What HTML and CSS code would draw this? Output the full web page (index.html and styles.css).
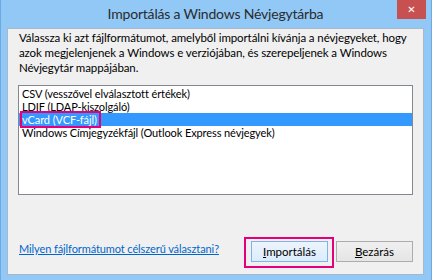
FILE: index.html
```html
<!DOCTYPE html>
<html lang="hu">

<head>
  <meta charset="UTF-8">
  <title>Importálás a Windows Névjegytárba</title>
  <link rel="stylesheet" href="styles.css">
</head>

<body>
  <div class="window">
    <div class="titlebar">
      <span></span>
      <div class="title">Importálás a Windows Névjegytárba</div>
      <div class="close-btn">&#x2715;</div>
    </div>

    <div class="content">
      <p class="intro">Válassza ki azt fájlformátumot, amelyből importálni kívánja a névjegyeket, hogy azok megjelenjenek a Windows e verziójában, és szerepeljenek a Windows Névjegytár mappájában.</p>

      <ul class="listbox">
        <li>CSV (vesszővel elválasztott értékek)</li>
        <li>LDIF (LDAP-kiszolgáló)</li>
        <li class="selected"><span class="mark">vCard (VCF-fájl)</span></li>
        <li>Windows Címjegyzékfájl (Outlook Express névjegyek)</li>
      </ul>

      <div class="footer">
        <a href="#" class="help-link">Milyen fájlformátumot célszerű választani?</a>
        <div class="buttons">
          <div class="mark-btn">
            <button class="btn btn-default"><u>I</u>mportálás</button>
          </div>
          <button class="btn btn-close"><u>B</u>ezárás</button>
        </div>
      </div>
    </div>
  </div>
</body>

</html>
```

FILE: styles.css
```css
body {
  margin: 0;
  font-family: Lato, sans-serif;
  font-size: 11.5px;
  letter-spacing: -0.1px;
  color: #000;
}

.window {
  width: 432px;
  height: 280px;
  box-sizing: border-box;
  background: #92c8f6;
  border-left: 1px solid #6fa9e2;
  border-right: 1px solid #6fa9e2;
  padding: 0 7px 5px 6px;
  display: flex;
  flex-direction: column;
}

.titlebar {
  height: 28px;
  display: grid;
  grid-template-columns: 1fr auto 1fr;
}

.title {
  font-size: 14px;
  letter-spacing: -0.2px;
  color: #2b2b2b;
  line-height: 28px;
}

.close-btn {
  justify-self: end;
  width: 29px;
  height: 19px;
  margin-right: -2px;
  background: #c75050;
  color: #fff;
  font-family: "DejaVu Sans", sans-serif;
  font-size: 10px;
  font-weight: bold;
  line-height: 19px;
  text-align: center;
}

.content {
  flex: 1;
  background: #f0f0f0;
  border: 1px solid #a8b8c8;
  padding: 1px 10px 0 10px;
  display: flex;
  flex-direction: column;
}

.intro {
  margin: 0 0 10px 1px;
  line-height: 15px;
}

.listbox {
  list-style: none;
  margin: 0;
  padding: 1px 0 0 0;
  height: 110px;
  box-sizing: border-box;
  background: #fff;
  border: 1px solid #828790;
  font-size: 11px;
}

.listbox li {
  height: 13px;
  line-height: 13px;
  padding-left: 3px;
}

.listbox li.selected {
  background: #3399ff;
  color: #fff;
}

.mark {
  outline: 2px solid #e4007c;
  outline-offset: 0;
  padding-right: 2px;
}

.footer {
  margin-top: auto;
  margin-bottom: 6px;
  display: flex;
  align-items: flex-start;
  justify-content: space-between;
}

.help-link {
  color: #0066cc;
  margin: 5px 0 0 1px;
  font-size: 11px;
}

.buttons {
  display: flex;
  align-items: flex-start;
  gap: 2px;
}

.mark-btn {
  border: 2px solid #e4007c;
  padding: 2px 4px 4px 5px;
}

.btn {
  width: 77px;
  height: 21px;
  font-family: inherit;
  font-size: 11.5px;
  color: #000;
  border: 1px solid #acacac;
  background: linear-gradient(#f0f0f0, #e5e5e5);
  padding: 0;
}

.btn-default {
  border-color: #7eb4ea;
  background: linear-gradient(#ecf4fc, #dcecfc);
}

.btn-close {
  margin-top: 4px;
}
```
